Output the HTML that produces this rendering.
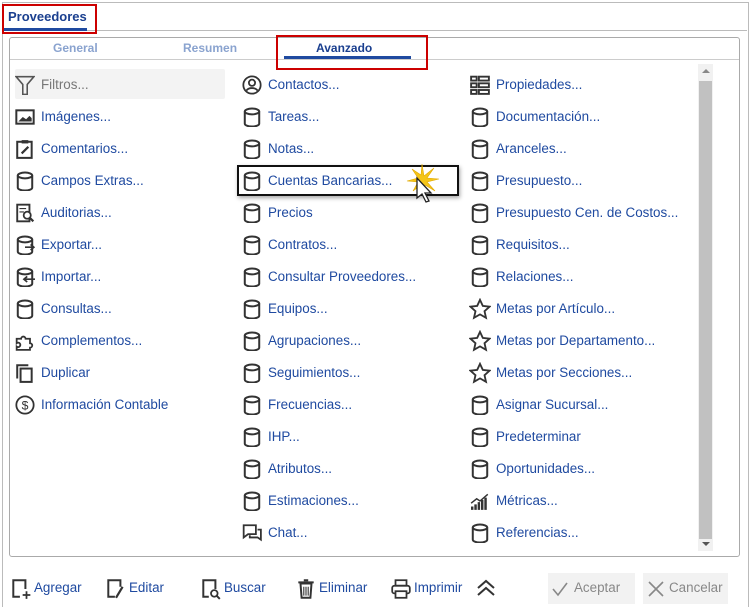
<!DOCTYPE html>
<html><head><meta charset="utf-8"><style>
body{margin:0;width:751px;height:609px;background:#fff;font-family:"Liberation Sans",sans-serif;position:relative;overflow:hidden}
.a{position:absolute}
.it{position:absolute;height:20px;line-height:20px;font-size:13.4px;color:#1f4aa0;white-space:nowrap}
.it svg{position:absolute;left:-26px;top:0px;width:20px;height:20px}
.bt{position:absolute;font-size:13.4px;color:#1f4aa0;line-height:20px}
.bt svg{position:absolute;left:-24px;top:0;width:22px;height:22px}
</style></head><body>
<svg width="0" height="0" style="position:absolute"><defs>
<g id="cyl" fill="none" stroke="#333" stroke-width="1.8"><ellipse cx="9" cy="4" rx="6.5" ry="2.6"/><path d="M2.5 4v11c0 1.5 2.9 2.6 6.5 2.6s6.5-1.1 6.5-2.6V4"/></g>
<g id="star" fill="none" stroke="#333" stroke-width="1.5"><path d="M9 1.5l2.3 5 5.5.6-4.1 3.7 1.2 5.4L9 13.4l-4.9 2.8 1.2-5.4L1.2 7.1l5.5-.6z"/></g>
</defs></svg>

<div class="a" style="left:2px;top:2px;width:745px;height:604px;border:1px solid #bbb;border-bottom:none"></div>
<div class="a" style="left:3px;top:30px;width:744px;height:1px;background:#bbb"></div>
<div class="a" style="left:8px;top:9px;font-size:13px;font-weight:bold;color:#1a3f8f">Proveedores</div>
<div class="a" style="left:4px;top:28px;width:83px;height:3px;background:#1f4aa0"></div>
<div class="a" style="left:2px;top:4px;width:95px;height:30px;border:2px solid #c00;box-sizing:border-box"></div>

<div class="a" style="left:9px;top:37px;width:731px;height:520px;border:1px solid #aaa;border-radius:3px;box-sizing:border-box"></div>
<div class="a" style="left:10px;top:59px;width:729px;height:1px;background:#ccc"></div>
<div class="a" style="left:53px;top:41px;font-size:12px;font-weight:bold;color:#8aa3cf">General</div>
<div class="a" style="left:183px;top:41px;font-size:12px;font-weight:bold;color:#8aa3cf">Resumen</div>
<div class="a" style="left:316px;top:41px;font-size:12px;font-weight:bold;color:#1a3f8f">Avanzado</div>
<div class="a" style="left:284px;top:56px;width:127px;height:3px;background:#1f4aa0"></div>
<div class="a" style="left:276px;top:35px;width:152px;height:35px;border:2px solid #c00;box-sizing:border-box"></div>

<div class="a" style="left:698px;top:64px;width:15px;height:487px;background:#f1f1f1"></div>
<div class="a" style="left:699px;top:81px;width:13px;height:458px;background:#c1c1c1"></div>
<div class="a" style="left:702px;top:69px;width:0;height:0;border-left:4px solid transparent;border-right:4px solid transparent;border-bottom:4px solid #888"></div>
<div class="a" style="left:702px;top:542px;width:0;height:0;border-left:4px solid transparent;border-right:4px solid transparent;border-top:4px solid #555"></div>

<div class="a" style="left:15px;top:69px;width:210px;height:30px;background:#f3f3f3;border-radius:2px"></div>

<div class="it" style="left:41px;top:75px;color:#777"><svg viewBox="0 0 18 18"><path d="M1 1.5h16l-6 7v9H7v-9z" fill="none" stroke="#555" stroke-width="1.4"/></svg>Filtros...</div>
<div class="it" style="left:41px;top:107px"><svg viewBox="0 0 18 18"><rect x="1.2" y="3" width="15.6" height="12" fill="none" stroke="#333" stroke-width="1.8"/><path d="M3 13l4-4 3 2 3-3 2 2v3z" fill="#333"/></svg>Imágenes...</div>
<div class="it" style="left:41px;top:139px"><svg viewBox="0 0 18 18"><rect x="2" y="2.5" width="13" height="14.5" fill="none" stroke="#333" stroke-width="1.8"/><path d="M6 1h6v3H6z" fill="#333"/><path d="M6 13l6-6" stroke="#333" stroke-width="2"/></svg>Comentarios...</div>
<div class="it" style="left:41px;top:171px"><svg viewBox="0 0 18 18"><use href="#cyl"/></svg>Campos Extras...</div>
<div class="it" style="left:41px;top:203px"><svg viewBox="0 0 18 18"><rect x="2" y="1.5" width="11" height="15" fill="none" stroke="#333" stroke-width="1.7"/><circle cx="11" cy="11" r="3.2" fill="#fff" stroke="#333" stroke-width="1.6"/><path d="M13.5 13.5l3 3" stroke="#333" stroke-width="2"/><path d="M4 5h6M4 8h4" stroke="#333"/></svg>Auditorias...</div>
<div class="it" style="left:41px;top:235px"><svg viewBox="0 0 18 18"><use href="#cyl"/><path d="M9 11h8M14 8.5l3 2.5-3 2.5" fill="none" stroke="#333" stroke-width="1.5"/></svg>Exportar...</div>
<div class="it" style="left:41px;top:267px"><svg viewBox="0 0 18 18"><use href="#cyl"/><path d="M8 11h10M11 8.5l-3 2.5 3 2.5" fill="none" stroke="#333" stroke-width="1.5"/></svg>Importar...</div>
<div class="it" style="left:41px;top:299px"><svg viewBox="0 0 18 18"><use href="#cyl"/></svg>Consultas...</div>
<div class="it" style="left:41px;top:331px"><svg viewBox="0 0 18 18"><path d="M1.5 7h4a2 2 0 1 1 4 0h4v4a2 2 0 1 1 0 4v2h-12v-3a2 2 0 1 0 0-3z" fill="none" stroke="#333" stroke-width="1.6"/></svg>Complementos...</div>
<div class="it" style="left:41px;top:363px"><svg viewBox="0 0 18 18"><path d="M2 14V2h10" fill="none" stroke="#333" stroke-width="1.8"/><rect x="5" y="5" width="10" height="12" fill="none" stroke="#333" stroke-width="1.8"/></svg>Duplicar</div>
<div class="it" style="left:41px;top:395px"><svg viewBox="0 0 18 18"><circle cx="9" cy="9" r="7.8" fill="none" stroke="#333" stroke-width="1.6"/><text x="9" y="13" font-size="11" text-anchor="middle" fill="#333" font-family="Liberation Sans">$</text></svg>Información Contable</div>

<div class="it" style="left:268px;top:75px"><svg viewBox="0 0 18 18"><circle cx="9" cy="9" r="7.8" fill="none" stroke="#333" stroke-width="1.6"/><circle cx="9" cy="7" r="2.8" fill="none" stroke="#333" stroke-width="1.6"/><path d="M4 14c2-3 8-3 10 0" fill="none" stroke="#333" stroke-width="1.6"/></svg>Contactos...</div>
<div class="it" style="left:268px;top:107px"><svg viewBox="0 0 18 18"><use href="#cyl"/></svg>Tareas...</div>
<div class="it" style="left:268px;top:139px"><svg viewBox="0 0 18 18"><use href="#cyl"/></svg>Notas...</div>
<div class="a" style="left:237px;top:165px;width:222px;height:31px;border:2px solid #111;box-sizing:border-box;box-shadow:1px 2px 4px rgba(0,0,0,.35)"></div>
<div class="it" style="left:268px;top:171px"><svg viewBox="0 0 18 18"><use href="#cyl"/></svg>Cuentas Bancarias...</div>
<svg class="a" style="left:402px;top:162px" width="40" height="44" viewBox="0 0 40 44"><path d="M20 2l2 12 10-8-7 10 12 1-12 3 8 9-10-6-1 10-3-10-8 6 5-9-11-1 11-3-6-9 9 6z" fill="#f5c518" stroke="#e0a800" stroke-width=".6"/><path d="M15 16v20l5-4 4 8 3-1-4-8h6z" fill="#fff" stroke="#222" stroke-width="1.3"/></svg>
<div class="it" style="left:268px;top:203px"><svg viewBox="0 0 18 18"><use href="#cyl"/></svg>Precios</div>
<div class="it" style="left:268px;top:235px"><svg viewBox="0 0 18 18"><use href="#cyl"/></svg>Contratos...</div>
<div class="it" style="left:268px;top:267px"><svg viewBox="0 0 18 18"><use href="#cyl"/></svg>Consultar Proveedores...</div>
<div class="it" style="left:268px;top:299px"><svg viewBox="0 0 18 18"><use href="#cyl"/></svg>Equipos...</div>
<div class="it" style="left:268px;top:331px"><svg viewBox="0 0 18 18"><use href="#cyl"/></svg>Agrupaciones...</div>
<div class="it" style="left:268px;top:363px"><svg viewBox="0 0 18 18"><use href="#cyl"/></svg>Seguimientos...</div>
<div class="it" style="left:268px;top:395px"><svg viewBox="0 0 18 18"><use href="#cyl"/></svg>Frecuencias...</div>
<div class="it" style="left:268px;top:427px"><svg viewBox="0 0 18 18"><use href="#cyl"/></svg>IHP...</div>
<div class="it" style="left:268px;top:459px"><svg viewBox="0 0 18 18"><use href="#cyl"/></svg>Atributos...</div>
<div class="it" style="left:268px;top:491px"><svg viewBox="0 0 18 18"><use href="#cyl"/></svg>Estimaciones...</div>
<div class="it" style="left:268px;top:523px"><svg viewBox="0 0 18 18"><path d="M1.5 2h11v8h-7l-4 3z" fill="none" stroke="#333" stroke-width="1.6"/><path d="M14 6h3v9l-3-2H7v-2" fill="none" stroke="#333" stroke-width="1.6"/></svg>Chat...</div>

<div class="it" style="left:496px;top:75px"><svg viewBox="0 0 18 18"><g fill="none" stroke="#333" stroke-width="1.7"><rect x="1" y="1.5" width="5" height="3.5"/><rect x="8" y="1.5" width="9" height="3.5"/><rect x="1" y="7.5" width="5" height="3.5"/><rect x="8" y="7.5" width="9" height="3.5"/><rect x="1" y="13.5" width="5" height="3.5"/><rect x="8" y="13.5" width="9" height="3.5"/></g></svg>Propiedades...</div>
<div class="it" style="left:496px;top:107px"><svg viewBox="0 0 18 18"><use href="#cyl"/></svg>Documentación...</div>
<div class="it" style="left:496px;top:139px"><svg viewBox="0 0 18 18"><use href="#cyl"/></svg>Aranceles...</div>
<div class="it" style="left:496px;top:171px"><svg viewBox="0 0 18 18"><use href="#cyl"/></svg>Presupuesto...</div>
<div class="it" style="left:496px;top:203px"><svg viewBox="0 0 18 18"><use href="#cyl"/></svg>Presupuesto Cen. de Costos...</div>
<div class="it" style="left:496px;top:235px"><svg viewBox="0 0 18 18"><use href="#cyl"/></svg>Requisitos...</div>
<div class="it" style="left:496px;top:267px"><svg viewBox="0 0 18 18"><use href="#cyl"/></svg>Relaciones...</div>
<div class="it" style="left:496px;top:299px"><svg viewBox="0 0 18 18" style="left:-27px;width:22px;height:22px;top:-1px"><use href="#star"/></svg>Metas por Artículo...</div>
<div class="it" style="left:496px;top:331px"><svg viewBox="0 0 18 18" style="left:-27px;width:22px;height:22px;top:-1px"><use href="#star"/></svg>Metas por Departamento...</div>
<div class="it" style="left:496px;top:363px"><svg viewBox="0 0 18 18" style="left:-27px;width:22px;height:22px;top:-1px"><use href="#star"/></svg>Metas por Secciones...</div>
<div class="it" style="left:496px;top:395px"><svg viewBox="0 0 18 18"><use href="#cyl"/></svg>Asignar Sucursal...</div>
<div class="it" style="left:496px;top:427px"><svg viewBox="0 0 18 18"><use href="#cyl"/></svg>Predeterminar</div>
<div class="it" style="left:496px;top:459px"><svg viewBox="0 0 18 18"><use href="#cyl"/></svg>Oportunidades...</div>
<div class="it" style="left:496px;top:491px"><svg viewBox="0 0 18 18"><path d="M2 17v-3M5 17v-5M8 17v-7M11 17v-9M14 17v-11" stroke="#333" stroke-width="2.2"/><path d="M1 11l5-4 3 2 7-6" fill="none" stroke="#333" stroke-width="1.3"/></svg>Métricas...</div>
<div class="it" style="left:496px;top:523px"><svg viewBox="0 0 18 18"><use href="#cyl"/></svg>Referencias...</div>

<div class="bt" style="left:34px;top:578px"><svg viewBox="0 0 20 20"><path d="M9 17H3V2h11v8" fill="none" stroke="#333" stroke-width="1.8"/><path d="M15 12v7M11.5 15.5h7" stroke="#333" stroke-width="1.6"/></svg>Agregar</div>
<div class="bt" style="left:129px;top:578px"><svg viewBox="0 0 20 20"><path d="M9 17H3V2h11v6" fill="none" stroke="#333" stroke-width="1.8"/><path d="M16 8l-6 10" stroke="#333" stroke-width="2"/></svg>Editar</div>
<div class="bt" style="left:224px;top:578px"><svg viewBox="0 0 20 20"><path d="M8 17H3V2h11v8" fill="none" stroke="#333" stroke-width="1.8"/><circle cx="13" cy="14" r="3" fill="none" stroke="#333" stroke-width="1.6"/><path d="M15 16l3 3" stroke="#333" stroke-width="1.8"/></svg>Buscar</div>
<div class="bt" style="left:319px;top:578px"><svg viewBox="0 0 20 20"><path d="M3 4h14M8 2h4" stroke="#333" stroke-width="1.8"/><path d="M5 5h10l-1 13H6z" fill="none" stroke="#333" stroke-width="1.8"/><path d="M8 8v8M10 8v8M12 8v8" stroke="#333"/></svg>Eliminar</div>
<div class="bt" style="left:414px;top:578px"><svg viewBox="0 0 20 20"><rect x="5" y="2" width="10" height="5" fill="none" stroke="#333" stroke-width="1.6"/><rect x="2" y="7" width="16" height="7" rx="2" fill="none" stroke="#333" stroke-width="1.6"/><rect x="5" y="12" width="10" height="6" fill="#fff" stroke="#333" stroke-width="1.6"/></svg>Imprimir</div>
<svg class="a" style="left:476px;top:579px" width="20" height="18" viewBox="0 0 20 18"><path d="M2 9l8-7 8 7M2 16l8-7 8 7" fill="none" stroke="#333" stroke-width="2"/></svg>
<div class="a" style="left:548px;top:573px;width:87px;height:31px;background:#f2f2f2"></div>
<div class="a" style="left:574px;top:580px;font-size:13.4px;color:#888">Aceptar</div>
<svg class="a" style="left:551px;top:580px" width="18" height="18" viewBox="0 0 18 18"><path d="M2 9l5 6 9-12" fill="none" stroke="#888" stroke-width="1.6"/></svg>
<div class="a" style="left:643px;top:573px;width:85px;height:31px;background:#f2f2f2"></div>
<div class="a" style="left:669px;top:580px;font-size:13.4px;color:#888">Cancelar</div>
<svg class="a" style="left:647px;top:580px" width="18" height="18" viewBox="0 0 18 18"><path d="M2 2l14 14M16 2L2 16" stroke="#888" stroke-width="1.6"/></svg>
</body></html>
